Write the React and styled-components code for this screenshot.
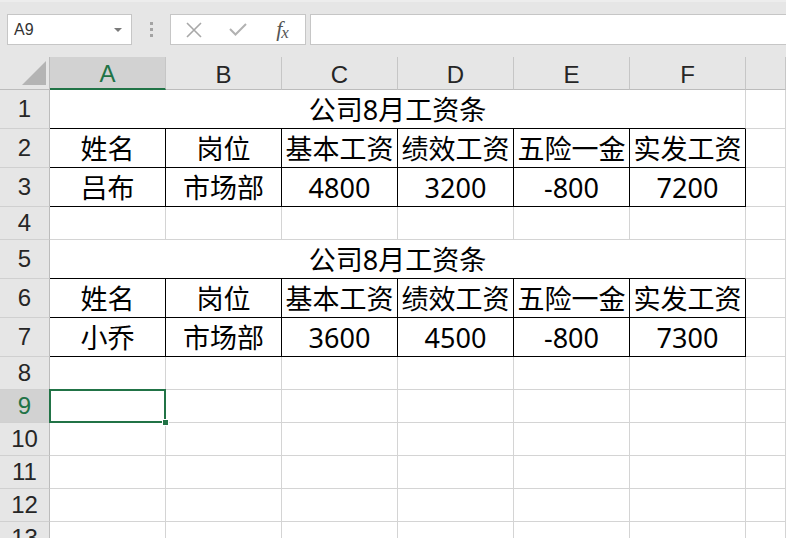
import React from 'react';
import styled, { createGlobalStyle } from 'styled-components';

const GREEN = '#217346';
const GRID = '#d4d4d4';

const GlobalStyle = createGlobalStyle`
  html, body {
    margin: 0;
    padding: 0;
    background: #fff;
    overflow: hidden;
  }
`;

const Page = styled.div`
  width: 786px;
  height: 538px;
  overflow: hidden;
  display: flex;
  flex-direction: column;
  background: #fff;
`;

// ---- formula toolbar ----
const Toolbar = styled.div`
  height: 57px;
  flex: none;
  box-sizing: border-box;
  background: #e6e6e6;
  border-top: 2px solid #ededed;
  display: flex;
  align-items: center;
  padding-left: 7px;
`;

const NameBox = styled.div`
  width: 125px;
  height: 31px;
  box-sizing: border-box;
  background: #fff;
  border: 1px solid #c6c6c6;
  display: flex;
  align-items: center;
  justify-content: space-between;
  padding: 0 9px 0 6px;
  font-family: "Liberation Sans", Arial, sans-serif;
  font-size: 16px;
  color: #333;
`;

const Caret = styled.span`
  width: 0;
  height: 0;
  border-left: 4px solid transparent;
  border-right: 4px solid transparent;
  border-top: 4px solid #7a7a7a;
`;

const Grip = styled.div`
  width: 38px;
  display: flex;
  flex-direction: column;
  align-items: center;
  gap: 3px;
  span {
    width: 3px;
    height: 3px;
    background: #a3a3a3;
  }
`;

const FxBox = styled.div`
  width: 136px;
  height: 31px;
  box-sizing: border-box;
  background: #fff;
  border: 1px solid #c6c6c6;
  display: flex;
  align-items: center;
  padding-left: 13px;
`;

const FxSlot = styled.div`
  width: ${p => p.$w}px;
  display: flex;
  justify-content: center;
  align-items: center;
`;

const FxLabel = styled.span`
  font-family: "Liberation Serif", "Times New Roman", serif;
  font-style: italic;
  font-size: 22px;
  color: #555;
  letter-spacing: -1px;
  sub {
    font-size: 17px;
    vertical-align: -2px;
  }
`;

const FormulaInput = styled.div`
  flex: 1;
  height: 31px;
  margin-left: 4px;
  margin-right: -2px;
  box-sizing: border-box;
  background: #fff;
  border: 1px solid #c6c6c6;
`;

// ---- sheet grid ----
const Sheet = styled.div`
  flex: none;
  display: grid;
  grid-template-columns: 50px repeat(6, 116px) 1fr;
  grid-template-rows: ${p => p.$rows};
`;

const Corner = styled.div`
  background: #e6e6e6;
  border-right: 1px solid #bcbcbc;
  border-bottom: 1px solid #bcbcbc;
  display: flex;
  justify-content: flex-end;
  align-items: flex-end;
  padding: 0 3px 4px 0;
  box-sizing: border-box;
  &::after {
    content: "";
    width: 0;
    height: 0;
    border-left: 24px solid transparent;
    border-bottom: 24px solid #b4b4b4;
  }
`;

const ColHeader = styled.div`
  box-sizing: border-box;
  background: ${p => (p.$active ? '#d2d2d2' : '#e6e6e6')};
  color: ${p => (p.$active ? GREEN : '#262626')};
  border-right: 1px solid #c6c6c6;
  border-bottom: ${p => (p.$active ? `2px solid ${GREEN}` : '1px solid #bcbcbc')};
  display: flex;
  align-items: center;
  justify-content: center;
  padding-top: 3px;
  font-family: "Liberation Sans", Arial, sans-serif;
  font-size: 24px;
`;

const RowHeader = styled.div`
  box-sizing: border-box;
  background: ${p => (p.$active ? '#d2d2d2' : '#e6e6e6')};
  color: ${p => (p.$active ? GREEN : '#262626')};
  border-right: 1px solid ${p => (p.$active ? GREEN : '#bcbcbc')};
  border-bottom: 1px solid #d0d0d0;
  display: flex;
  align-items: center;
  justify-content: center;
  font-family: "Liberation Sans", Arial, sans-serif;
  font-size: 24px;
  line-height: 1;
`;

const Cell = styled.div`
  position: relative;
  box-sizing: border-box;
  grid-column: ${p => (p.$span ? `span ${p.$span}` : 'auto')};
  border-right: 1px solid ${p => (p.$boxed ? '#000' : GRID)};
  border-bottom: 1px solid ${p => (p.$boxed || p.$title ? '#000' : GRID)};
  display: flex;
  align-items: center;
  justify-content: center;
  font-family: "Noto Sans", "Noto Sans CJK SC", sans-serif;
  font-size: 27px;
  line-height: 1;
  color: #000;
  white-space: nowrap;
`;

const Selection = styled.div`
  position: absolute;
  top: -1px;
  left: -1px;
  right: -1px;
  bottom: -1px;
  border: 2px solid ${GREEN};
  z-index: 2;
  &::after {
    content: "";
    position: absolute;
    right: -5px;
    bottom: -5px;
    width: 5px;
    height: 5px;
    background: ${GREEN};
    border: 1px solid #fff;
  }
`;

const COLS = ['A', 'B', 'C', 'D', 'E', 'F', ''];
const HEAD = ['姓名', '岗位', '基本工资', '绩效工资', '五险一金', '实发工资'];

const ROWS = [
  { n: 1, h: 39, title: '公司8月工资条' },
  { n: 2, h: 39, cells: HEAD },
  { n: 3, h: 39, cells: ['吕布', '市场部', '4800', '3200', '-800', '7200'] },
  { n: 4, h: 33 },
  { n: 5, h: 39, title: '公司8月工资条' },
  { n: 6, h: 39, cells: HEAD },
  { n: 7, h: 39, cells: ['小乔', '市场部', '3600', '4500', '-800', '7300'] },
  { n: 8, h: 33 },
  { n: 9, h: 33 },
  { n: 10, h: 33 },
  { n: 11, h: 33 },
  { n: 12, h: 33 },
  { n: 13, h: 33 },
];

const SELECTED = { row: 9, col: 0 };

function XIcon() {
  return (
    <svg width="16" height="16" viewBox="0 0 16 16">
      <path d="M1 1 L15 15 M15 1 L1 15" stroke="#a8a8a8" strokeWidth="1.6" fill="none" />
    </svg>
  );
}

function CheckIcon() {
  return (
    <svg width="18" height="13" viewBox="0 0 18 13">
      <path d="M1 6 L6.5 11.5 L17 1" stroke="#b2b2b2" strokeWidth="2" fill="none" />
    </svg>
  );
}

function SheetRow({ row }) {
  const active = row.n === SELECTED.row;
  let cells;
  if (row.title) {
    cells = [
      <Cell key="t" $span={6} $title>{row.title}</Cell>,
      <Cell key="g" />,
    ];
  } else {
    cells = COLS.map((c, i) => {
      const text = row.cells && row.cells[i];
      const boxed = !!row.cells && i < 6;
      return (
        <Cell key={i} $boxed={boxed}>
          {text}
          {active && i === SELECTED.col && <Selection />}
        </Cell>
      );
    });
  }
  return (
    <>
      <RowHeader $active={active}>{row.n}</RowHeader>
      {cells}
    </>
  );
}

export default function App() {
  const template = ['33px', ...ROWS.map(r => `${r.h}px`)].join(' ');
  return (
    <Page>
      <GlobalStyle />
      <Toolbar>
        <NameBox>
          A9
          <Caret />
        </NameBox>
        <Grip>
          <span />
          <span />
          <span />
        </Grip>
        <FxBox>
          <FxSlot $w={20}><XIcon /></FxSlot>
          <FxSlot $w={68}><CheckIcon /></FxSlot>
          <FxSlot $w={20}><FxLabel>f<sub>x</sub></FxLabel></FxSlot>
        </FxBox>
        <FormulaInput />
      </Toolbar>
      <Sheet $rows={template}>
        <Corner />
        {COLS.map((c, i) => (
          <ColHeader key={i} $active={i === SELECTED.col}>{c}</ColHeader>
        ))}
        {ROWS.map(r => (
          <SheetRow key={r.n} row={r} />
        ))}
      </Sheet>
    </Page>
  );
}
